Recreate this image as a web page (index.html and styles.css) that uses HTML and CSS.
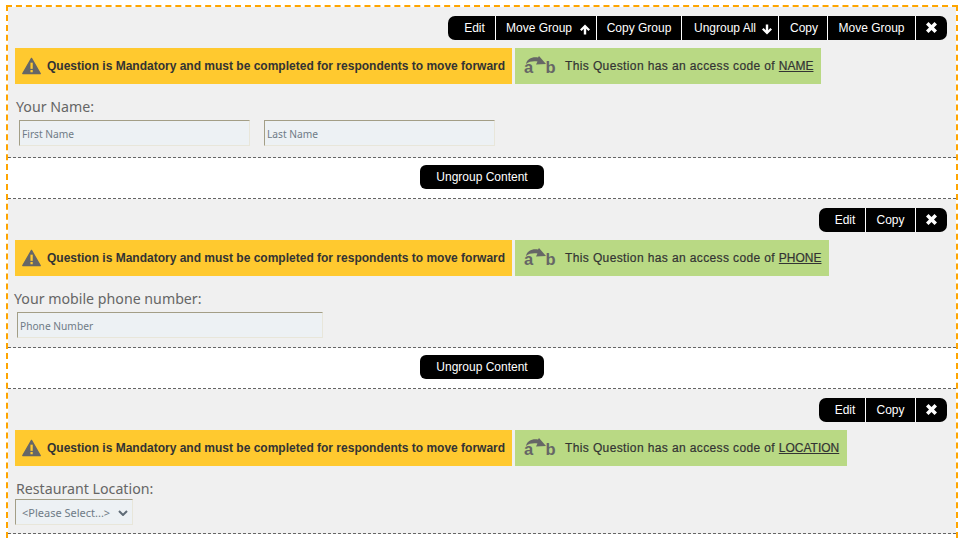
FILE: index.html
```html
<!DOCTYPE html>
<html lang="en">
<head>
<meta charset="utf-8">
<title>Survey builder</title>
<link rel="stylesheet" href="styles.css">
</head>
<body>
<svg width="0" height="0" class="defs">
  <symbol id="warn" viewBox="0 0 20 18"><path d="M10 1 L19.2 17 H0.8 Z" fill="#666" stroke="#666" stroke-width="1.4" stroke-linejoin="round"/><rect x="8.9" y="5.5" width="2.4" height="6.5" fill="#ffc92f"/><rect x="8.9" y="13.2" width="2.4" height="2.4" fill="#ffc92f"/></symbol>
  <symbol id="swoop" viewBox="0 0 32 20"><path d="M2 8 C3 3 8 0.5 14 1.5 L15 0 L22 8 L12 8.5 L13.5 5.5 C9 5 5 5.5 2 8 Z" fill="#666"/></symbol>
  <symbol id="up" viewBox="0 0 10 11"><path d="M5 0.5 L10 5.5 L8.4 7 L6.2 4.8 V10.5 H3.8 V4.8 L1.6 7 L0 5.5 Z" fill="#fff"/></symbol>
  <symbol id="down" viewBox="0 0 10 11"><path d="M5 10.5 L10 5.5 L8.4 4 L6.2 6.2 V0.5 H3.8 V6.2 L1.6 4 L0 5.5 Z" fill="#fff"/></symbol>
  <symbol id="close" viewBox="0 0 11 11"><path d="M0 2.5 L2.5 0 L5.5 3 L8.5 0 L11 2.5 L8 5.5 L11 8.5 L8.5 11 L5.5 8 L2.5 11 L0 8.5 L3 5.5 Z" fill="#fff"/></symbol>
</svg>
<main class="frame">
  <section class="question q-name">
    <div class="toolbar">
      <a class="tool w-edit">Edit</a>
      <a class="tool w-move-up">Move Group <svg class="arrow"><use href="#up"/></svg></a>
      <a class="tool w-copy-group">Copy Group</a>
      <a class="tool w-ungroup">Ungroup All <svg class="arrow"><use href="#down"/></svg></a>
      <a class="tool w-copy">Copy</a>
      <a class="tool w-move">Move Group</a>
      <a class="tool w-close"><svg class="x"><use href="#close"/></svg></a>
    </div>
    <div class="alerts">
      <div class="alert mandatory"><svg class="warn"><use href="#warn"/></svg>Question is Mandatory and must be completed for respondents to move forward</div>
      <div class="alert code"><svg class="ab" viewBox="0 0 32 20"><use href="#swoop"/><text x="0" y="17" class="ab-letter">a</text><text x="21.5" y="17" class="ab-letter">b</text></svg><span>This Question has an access code of <u>NAME</u></span></div>
    </div>
    <label class="label">Your Name:</label>
    <div class="fields">
      <input class="input w-name" placeholder="First Name">
      <input class="input w-name" placeholder="Last Name">
    </div>
  </section>
  <div class="ungroup"><button class="ungroup-btn">Ungroup Content</button></div>
  <section class="question q-phone">
    <div class="toolbar">
      <a class="tool w-edit2">Edit</a>
      <a class="tool w-copy2">Copy</a>
      <a class="tool w-close"><svg class="x"><use href="#close"/></svg></a>
    </div>
    <div class="alerts">
      <div class="alert mandatory"><svg class="warn"><use href="#warn"/></svg>Question is Mandatory and must be completed for respondents to move forward</div>
      <div class="alert code"><svg class="ab" viewBox="0 0 32 20"><use href="#swoop"/><text x="0" y="17" class="ab-letter">a</text><text x="21.5" y="17" class="ab-letter">b</text></svg><span>This Question has an access code of <u>PHONE</u></span></div>
    </div>
    <label class="label label-phone">Your mobile phone number:</label>
    <div class="fields fields-phone">
      <input class="input w-phone" placeholder="Phone Number">
    </div>
  </section>
  <div class="ungroup"><button class="ungroup-btn">Ungroup Content</button></div>
  <section class="question q-location">
    <div class="toolbar">
      <a class="tool w-edit2">Edit</a>
      <a class="tool w-copy2">Copy</a>
      <a class="tool w-close"><svg class="x"><use href="#close"/></svg></a>
    </div>
    <div class="alerts">
      <div class="alert mandatory"><svg class="warn"><use href="#warn"/></svg>Question is Mandatory and must be completed for respondents to move forward</div>
      <div class="alert code"><svg class="ab" viewBox="0 0 32 20"><use href="#swoop"/><text x="0" y="17" class="ab-letter">a</text><text x="21.5" y="17" class="ab-letter">b</text></svg><span>This Question has an access code of <u>LOCATION</u></span></div>
    </div>
    <label class="label">Restaurant Location:</label>
    <div class="select-row">
      <div class="select">&lt;Please Select...&gt;<svg class="chev" viewBox="0 0 10 6"><path d="M1 1 L5 5 L9 1" fill="none" stroke="#5f6b76" stroke-width="2"/></svg></div>
    </div>
  </section>
  <div class="tail"></div>
</main>
</body>
</html>
```
FILE: styles.css
```css
* { box-sizing: border-box; }
html, body { margin: 0; padding: 0; height: 538px; overflow: hidden; background: #fff; }
body { padding: 5px 1px 0 6px; font-family: "Liberation Sans", Arial, sans-serif; }
.defs { display: block; height: 0; width: 0; }
.ab-letter { font: bold 16.5px "Liberation Sans", Arial, sans-serif; letter-spacing: 0; fill: #666; stroke: none; -webkit-text-stroke: 0; }
.frame { border: 2px dashed #ffa500; border-bottom: 0; height: 533px; width: 952px; overflow: hidden; }
.question { background: #f0f0f0; border-bottom: 1px dashed #666; padding: 9px 9px 0 7px; }
.q-name { height: 151px; }
.q-phone { height: 149px; }
.q-location { height: 145px; }
.tail { height: 4px; background: #fff; }
.toolbar { display: flex; justify-content: flex-end; height: 24px; }
.tool { background: #000; color: #fff; font-size: 12px; height: 24px; display: flex; align-items: center; justify-content: center; border-right: 1px solid #fff; }
.tool:first-child { border-radius: 7px 0 0 7px; }
.tool:last-child { border-right: 0; border-radius: 0 7px 7px 0; }
.w-edit { width: 48px; padding-left: 6px; }
.w-move-up { width: 101px; justify-content: flex-start; padding-left: 10px; gap: 8px; }
.w-copy-group { width: 85px; }
.w-ungroup { width: 97px; justify-content: flex-start; padding-left: 12px; gap: 6px; }
.w-copy { width: 49px; padding-left: 2px; }
.w-move { width: 88px; }
.w-close { width: 31px; padding-right: 1px; }
.w-edit2 { width: 47px; padding-left: 6px; }
.w-copy2 { width: 50px; }
.arrow { width: 10px; height: 11px; margin-top: 2px; }
.x { width: 11px; height: 11px; margin-top: -1px; }
.alerts { display: flex; gap: 3px; margin-top: 8px; height: 36px; }
.alert { display: flex; align-items: center; height: 36px; font-size: 12px; color: #333; padding-right: 7px; white-space: nowrap; }
.mandatory { background: #ffc92f; width: 497px; font-weight: bold; padding-left: 7px; }
.code { background: #b9d984; padding-left: 9px; padding-right: 7.4px; letter-spacing: 0.38px; -webkit-text-stroke: 0.2px #333; }
.warn { width: 19px; height: 18px; margin-right: 6px; flex: none; }
.ab { width: 32px; height: 20px; margin-right: 9px; flex: none; }
.code u { letter-spacing: 0; }
.label { display: block; margin: 13px 0 0 1px; height: 20px; font: 14.2px/20px "Noto Sans", Tahoma, sans-serif; color: #666; }
.label-phone { margin-left: -1px; }
.fields { display: flex; gap: 14px; margin: 3px 0 0 4px; }
.fields-phone { margin-left: 2px; }
.input { height: 26px; padding: 2px 2px 0; font: 10.2px "Noto Sans", Tahoma, sans-serif; background: #edf1f4; border: 1px solid #e8e6da; border-top-color: #a39e86; border-left-color: #a39e86; border-radius: 0; outline: 0; color: #666; }
.input::placeholder { color: #6f7b86; opacity: 1; }
.w-name { width: 231px; }
.w-phone { width: 306px; }
.select-row { margin-top: 0; }
.select { width: 118px; height: 26px; display: flex; align-items: center; justify-content: space-between; padding: 1px 4px 0 6px; font: 11px "Noto Sans", Tahoma, sans-serif; color: #6f7b86; background: #edf1f4; border: 1px solid #e8e6da; border-top-color: #a39e86; border-left-color: #a39e86; }
.chev { width: 10px; height: 6px; }
.ungroup { background: #fff; border-bottom: 1px dashed #666; height: 41px; display: flex; justify-content: center; align-items: center; padding-bottom: 2px; }
.ungroup-btn { background: #000; color: #fff; border: 0; border-radius: 6px; width: 124px; height: 24px; padding: 0; font: 12px "Liberation Sans", Arial, sans-serif; }
```
